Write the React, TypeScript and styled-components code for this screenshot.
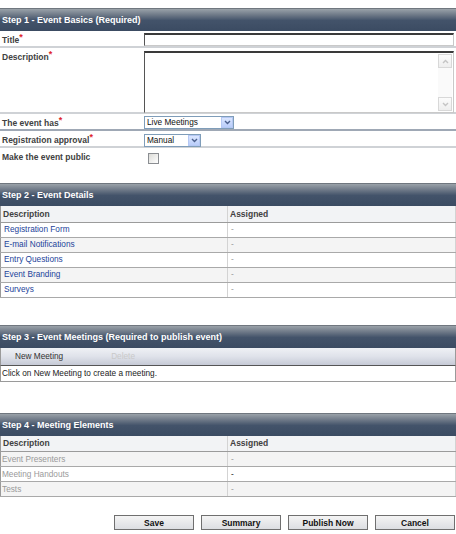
import React from "react";
import styled, { createGlobalStyle } from "styled-components";

const GlobalStyle = createGlobalStyle`
  html, body { margin: 0; padding: 0; background: #fff; }
  body { font-family: "Liberation Sans", Arial, sans-serif; font-size: 8px; color: #333; }
  * { box-sizing: border-box; }
`;

const Page = styled.div`
  width: 456px;
  padding-top: 8px;
  display: flex;
  flex-direction: column;
`;

const Section = styled.section<{ $gap?: number }>`
  margin-top: ${(p) => p.$gap ?? 0}px;
  display: flex;
  flex-direction: column;
`;

const StepHeader = styled.div`
  height: 23px;
  border-top: 1px solid #70777f;
  background: linear-gradient(#9aa2a9 0%, #6c7786 28%, #43536a 52%, #3b4b62 100%);
  color: #fff;
  font: bold 9px "Liberation Sans", Arial, sans-serif;
  display: flex;
  align-items: center;
  padding-left: 2px;
`;

const FormRow = styled.div<{ $h: number; $sep?: string; $sepW?: number }>`
  display: flex;
  height: ${(p) => p.$h}px;
  border-bottom: ${(p) => p.$sepW ?? 2}px solid ${(p) => p.$sep ?? "#cfd2d6"};
`;

const Label = styled.div`
  width: 144px;
  flex: none;
  padding: 2px 0 0 2px;
  font: bold 8.5px/14px "Liberation Sans", Arial, sans-serif;
  color: #414141;
`;

const Req = styled.span`
  color: #e0252c;
  font-size: 9px;
  vertical-align: 3px;
  line-height: 0;
`;

const Field = styled.div<{ $top?: number }>`
  flex: 1;
  padding: ${(p) => p.$top ?? 2}px 2px 0 0;
  display: flex;
  align-items: flex-start;
`;

const TextBox = styled.div<{ $h: number }>`
  width: 100%;
  height: ${(p) => p.$h}px;
  background: #fff;
  border-top: 2px solid #3a3a3a;
  border-left: 1px solid #555;
  border-right: 1px solid #c9c9c9;
  border-bottom: 1px solid #c9c9c9;
  display: flex;
  justify-content: flex-end;
`;

const ScrollBar = styled.div`
  width: 14px;
  margin: 1px 1px 1px 0;
  display: flex;
  flex-direction: column;
  justify-content: space-between;
  background: #fafafa;
`;

const ScrollBtn = styled.div`
  height: 14px;
  border: 1px solid #d8d8d8;
  background: linear-gradient(#fbfbfb, #eeeeee);
  display: flex;
  align-items: center;
  justify-content: center;
`;

const Select = styled.div<{ $w: number }>`
  width: ${(p) => p.$w}px;
  height: 13px;
  border: 1px solid #7f9db9;
  background: #fff;
  display: flex;
  align-items: stretch;
  font: 8.25px "Liberation Sans", Arial, sans-serif;
  color: #111;
`;

const SelectText = styled.span`
  flex: 1;
  padding-left: 2px;
  line-height: 11px;
`;

const SelectBtn = styled.span`
  width: 12px;
  border: 1px solid #b5c8f4;
  background: linear-gradient(#dbe6ff, #b9cdfa);
  display: flex;
  align-items: center;
  justify-content: center;
`;

const CheckBox = styled.div`
  width: 11px;
  height: 11px;
  margin: 3px 0 0 4px;
  border: 1px solid #8b8e92;
  background: linear-gradient(135deg, #dcdcd8, #ffffff);
`;

const Grid = styled.table`
  width: 100%;
  border-collapse: collapse;
  table-layout: fixed;
  border-left: 1px solid #9a9a9a;
  border-right: 1px solid #8a8a8a;
`;

const Th = styled.th<{ $w?: number }>`
  width: ${(p) => (p.$w ? `${p.$w}px` : "auto")};
  height: 16px;
  padding: 0 2px;
  text-align: left;
  background: #f2f3f5;
  font: bold 8.5px "Liberation Sans", Arial, sans-serif;
  color: #414141;
  border-bottom: 1px solid #9b9b9b;
  border-right: 1px solid #d3d3d3;
`;

const Td = styled.td<{ $tone?: "link" | "muted" | "plain"; $pad?: number }>`
  height: 15px;
  padding: 0 ${(p) => p.$pad ?? 3}px;
  font: 8.25px "Liberation Sans", Arial, sans-serif;
  color: ${(p) => (p.$tone === "link" ? "#23439a" : p.$tone === "muted" ? "#9a9a9a" : "#222")};
  border-bottom: 1px solid #a9a9a9;
  border-right: 1px solid #d3d3d3;
  white-space: nowrap;
`;

const Tr = styled.tr<{ $alt?: boolean }>`
  background: ${(p) => (p.$alt ? "#f4f4f4" : "#fff")};
`;

const Toolbar = styled.div`
  height: 18px;
  display: flex;
  align-items: center;
  gap: 48px;
  padding-left: 14px;
  background: linear-gradient(#eff1f5, #dfe2ea 50%, #c6cad6);
  border-left: 1px solid #9a9a9a;
  border-right: 1px solid #9a9a9a;
  border-bottom: 1px solid #555;
  font: 8.25px "Liberation Sans", Arial, sans-serif;
`;

const ToolItem = styled.span<{ $disabled?: boolean }>`
  color: ${(p) => (p.$disabled ? "#c9c9c9" : "#333")};
`;

const Message = styled.div`
  height: 16px;
  padding-left: 1px;
  display: flex;
  align-items: center;
  border-left: 1px solid #9a9a9a;
  border-right: 1px solid #9a9a9a;
  border-bottom: 1px solid #9a9a9a;
  font: 8.25px "Liberation Sans", Arial, sans-serif;
  color: #222;
`;

const ButtonBar = styled.div`
  margin-top: 18px;
  display: flex;
  justify-content: flex-end;
  gap: 7px;
  padding-right: 1px;
`;

const Button = styled.button`
  width: 80px;
  height: 15px;
  padding: 0;
  border: 1px solid #6f6f6f;
  background: linear-gradient(#f4f4f4, #dcdee2);
  font: bold 8.5px "Liberation Sans", Arial, sans-serif;
  color: #111;
  cursor: pointer;
`;

const Chevron = ({ up, color }: { up?: boolean; color: string }) => (
  <svg width="7" height="5" viewBox="0 0 7 5">
    <path
      d={up ? "M1 4 L3.5 1.5 L6 4" : "M1 1 L3.5 3.5 L6 1"}
      fill="none"
      stroke={color}
      strokeWidth="1.4"
    />
  </svg>
);

const step2 = ["Registration Form", "E-mail Notifications", "Entry Questions", "Event Branding", "Surveys"];
const step4 = ["Event Presenters", "Meeting Handouts", "Tests"];

export default function App() {
  return (
    <>
      <GlobalStyle />
      <Page>
        <Section>
          <StepHeader>Step 1 - Event Basics (Required)</StepHeader>
          <FormRow $h={17}>
            <Label>
              Title<Req>*</Req>
            </Label>
            <Field>
              <TextBox $h={13} />
            </Field>
          </FormRow>
          <FormRow $h={66}>
            <Label>
              Description<Req>*</Req>
            </Label>
            <Field $top={3}>
              <TextBox $h={62}>
                <ScrollBar>
                  <ScrollBtn>
                    <Chevron up color="#c4c4c4" />
                  </ScrollBtn>
                  <ScrollBtn>
                    <Chevron color="#c4c4c4" />
                  </ScrollBtn>
                </ScrollBar>
              </TextBox>
            </Field>
          </FormRow>
          <FormRow $h={17} $sep="#9fa8b5">
            <Label>
              The event has<Req>*</Req>
            </Label>
            <Field>
              <Select $w={90}>
                <SelectText>Live Meetings</SelectText>
                <SelectBtn>
                  <Chevron color="#4a5f8c" />
                </SelectBtn>
              </Select>
            </Field>
          </FormRow>
          <FormRow $h={17}>
            <Label>
              Registration approval<Req>*</Req>
            </Label>
            <Field $top={3}>
              <Select $w={57}>
                <SelectText>Manual</SelectText>
                <SelectBtn>
                  <Chevron color="#4a5f8c" />
                </SelectBtn>
              </Select>
            </Field>
          </FormRow>
          <FormRow $h={17} $sepW={0}>
            <Label>Make the event public</Label>
            <Field>
              <CheckBox />
            </Field>
          </FormRow>
        </Section>

        <Section $gap={18}>
          <StepHeader>Step 2 - Event Details</StepHeader>
          <Grid>
            <thead>
              <tr>
                <Th $w={227}>Description</Th>
                <Th>Assigned</Th>
              </tr>
            </thead>
            <tbody>
              {step2.map((name, i) => (
                <Tr key={name} $alt={i % 2 === 1}>
                  <Td $tone="link">{name}</Td>
                  <Td $tone="muted">-</Td>
                </Tr>
              ))}
            </tbody>
          </Grid>
        </Section>

        <Section $gap={27}>
          <StepHeader>Step 3 - Event Meetings (Required to publish event)</StepHeader>
          <Toolbar>
            <ToolItem>New Meeting</ToolItem>
            <ToolItem $disabled>Delete</ToolItem>
          </Toolbar>
          <Message>Click on New Meeting to create a meeting.</Message>
        </Section>

        <Section $gap={31}>
          <StepHeader>Step 4 - Meeting Elements</StepHeader>
          <Grid>
            <thead>
              <tr>
                <Th $w={227}>Description</Th>
                <Th>Assigned</Th>
              </tr>
            </thead>
            <tbody>
              {step4.map((name, i) => (
                <Tr key={name} $alt={i % 2 === 0}>
                  <Td $tone="muted" $pad={1}>
                    {name}
                  </Td>
                  <Td $tone={i === 1 ? "plain" : "muted"}>-</Td>
                </Tr>
              ))}
            </tbody>
          </Grid>
        </Section>

        <ButtonBar>
          <Button>Save</Button>
          <Button>Summary</Button>
          <Button>Publish Now</Button>
          <Button>Cancel</Button>
        </ButtonBar>
      </Page>
    </>
  );
}
